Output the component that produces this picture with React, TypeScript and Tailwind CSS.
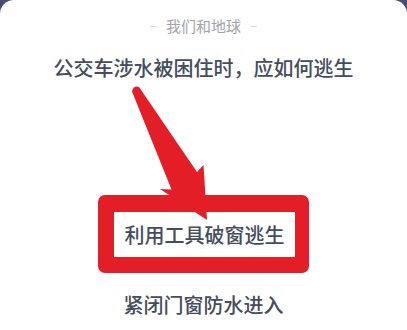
export default function App() {
  return (
    <div className="relative h-[330px] w-[407px] overflow-hidden bg-[#4a4a7a] font-['Noto_Sans_CJK_SC',sans-serif]">
      <div className="flex h-full flex-col items-center rounded-t-[14px] bg-white pt-[18px]">
        <div className="flex items-center gap-[9px] text-[15px] leading-4 text-[#a3a3ab]">
          <span className="h-px w-[7px] bg-[#dcdce0]" />
          <span>我们和地球</span>
          <span className="h-px w-[7px] bg-[#dcdce0]" />
        </div>
        <h1 className="mt-5 text-[20px] font-medium leading-7 text-[#444c5e]">公交车涉水被困住时，应如何逃生</h1>
        <div className="mt-[113px] flex h-[78px] w-[211px] items-center justify-center rounded-[7px] border-b-[16px] border-l-[16px] border-r-[14px] border-t-[17px] border-[#e41e26]">
          <span className="text-[20px] font-medium leading-7 text-[#444c5e]">利用工具破窗逃生</span>
        </div>
        <p className="mt-[18px] text-[20px] font-medium leading-7 text-[#444c5e]">紧闭门窗防水进入</p>
      </div>
      <svg className="absolute left-0 top-0" width="407" height="330" viewBox="0 0 407 330">
        <path
          d="M132 91.5 Q133.5 85 139 87 L197 172 L203.5 165 L207 220 L160 189 L171.5 189.5 Z"
          fill="#e41e26"
        />
      </svg>
    </div>
  );
}
